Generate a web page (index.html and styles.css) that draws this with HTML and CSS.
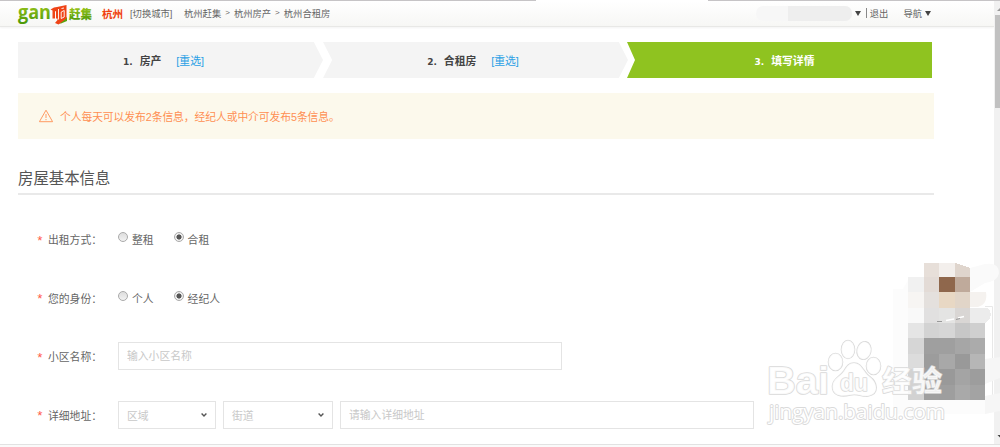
FILE: index.html
```html
<!DOCTYPE html>
<html lang="zh-CN">
<head>
    <meta charset="UTF-8">
    <title>杭州合租房 - 赶集</title>
    <link rel="stylesheet" href="styles.css">
</head>
<body>

<div class="tabline"><span></span><span></span></div>

<div class="window">
    <div class="page">
        <header class="header">
            <svg class="logo" width="75" height="24" viewBox="0 0 75 24">
                <defs>
                    <linearGradient id="green" x1="0" y1="0" x2="0" y2="1">
                        <stop offset=".2" stop-color="#9bc51b"/>
                        <stop offset=".9" stop-color="#4e9a08"/>
                    </linearGradient>
                </defs>
                <text class="logo-en" x="0" y="18" textLength="33" lengthAdjust="spacingAndGlyphs" fill="url(#green)">gan</text>
                <path d="M41 22.500 L49 16 V20 L43 22.500 Z" fill="#58a40c"/>
                <path d="M32.500 8.500 L36 6.500 L39 6 L48.500 4 V17.500 L40.500 23.500 L37 22 L39.500 19 V17.500 H38 V10 L37 10.500 V17.500 H34.500 V9.500 Z" fill="#ef4316"/>
                <path d="M40.500 8 V18.500 M43.200 11 L46.200 9.500 V16 L43.200 17.500 Z M43.500 7.500 L46 7" fill="none" stroke="#fff" stroke-width=".9"/>
                <text class="logo-cn" x="51" y="17.500" textLength="23" lengthAdjust="spacingAndGlyphs" fill="url(#green)">赶集</text>
            </svg>
            <b class="city">杭州</b>
            <a class="switch">[切换城市]</a>
            <nav class="crumbs"><a>杭州赶集</a><i>&gt;</i><a>杭州房产</a><i>&gt;</i><a>杭州合租房</a></nav>
            <div class="account">
                <span class="username"><span></span></span>
                <span class="caret"></span>
                <span class="bar"></span>
                <a class="logout">退出</a>
                <a>导航</a>
                <span class="caret"></span>
            </div>
        </header>

        <main class="content">
            <div class="steps">
                <div class="step first"><b><em>1.</em>房产</b><a>[重选]</a></div>
                <div class="step second"><b><em>2.</em>合租房</b><a>[重选]</a></div>
                <div class="step active"><b><em>3.</em>填写详情</b></div>
            </div>

            <div class="notice">
                <svg width="16" height="14" viewBox="0 0 16 14" fill="none" stroke="#ff9a62">
                    <path d="M8 1.2 L14.6 12.7 H1.4 Z M8 5 V9 M8 10 V11.2"/>
                </svg>
                <p>个人每天可以发布2条信息，经纪人或中介可发布5条信息。</p>
            </div>

            <h2>房屋基本信息</h2>

            <form class="form">
                <div class="row">
                    <span class="star">*</span><span class="label">出租方式：</span>
                    <label class="option"><input type="radio" name="rent">整租</label>
                    <label class="option"><input type="radio" name="rent" checked>合租</label>
                </div>
                <div class="row">
                    <span class="star">*</span><span class="label">您的身份：</span>
                    <label class="option"><input type="radio" name="role">个人</label>
                    <label class="option"><input type="radio" name="role" checked>经纪人</label>
                </div>
                <div class="row">
                    <span class="star">*</span><span class="label">小区名称：</span>
                    <input class="field estate" type="text" placeholder="输入小区名称">
                </div>
                <div class="row">
                    <span class="star">*</span><span class="label">详细地址：</span>
                    <div class="field select area">区域<svg width="6" height="4" viewBox="0 0 6 4"><path d="M.6 .6 L3 3 L5.4 .6"/></svg></div>
                    <div class="field select street">街道<svg width="6" height="4" viewBox="0 0 6 4"><path d="M.6 .6 L3 3 L5.4 .6"/></svg></div>
                    <input class="field address" type="text" placeholder="请输入详细地址">
                </div>
            </form>
        </main>
    </div>

    <div class="scrollbar">
        <svg width="6" height="13" viewBox="0 0 6 13"><path d="M3 9 L6 6 V9 Z" fill="#999"/></svg>
        <div class="thumb"></div>
        <svg class="down" width="6" height="12" viewBox="0 0 6 12"><path d="M3.5 3 H6 V5.5 Z" fill="#444"/></svg>
    </div>
</div>
<div class="statusbar"></div>

<!-- blurred contact card and site watermark float over the form -->
<svg class="overlay" width="240" height="180" viewBox="760 255 240 180">
    <path d="M985 306.500 H992.500 V400" fill="none" stroke="#e8e8e8"/>
    <path d="M893 289 H903 L910 277 H925 V400 H985 V414 H893 Z" fill="#fcfcfc"/>
    <g fill="#f6f6f6">
        <path d="M970 268 L985 264 Q999 262 999 273 Q998 281 985 283 L970 292 Z" fill="#fafafa"/>
        <path d="M970 292 H986 Q988 304 978 307 H970 Z" fill="#f5f2ef"/>
        <path d="M985 359 L1000 357 V378 L985 384 Z"/>
        <path d="M985 396 L1000 393 V411 L985 414 Z"/>
    </g>
    <g shape-rendering="crispEdges">
        <rect x="924" y="263" width="15" height="14" fill="#e7dfd9"/>
        <rect x="939" y="263" width="16" height="14" fill="#f3efec"/>
        <path d="M955 263 L970 268 V277 H955 Z" fill="#dfd5cd"/>
        <rect x="908" y="277" width="16" height="15" fill="#f1f1f1"/>
        <rect x="924" y="277" width="15" height="15" fill="#e3dbd6"/>
        <rect x="939" y="277" width="16" height="15" fill="#8f674c"/>
        <rect x="955" y="277" width="15" height="15" fill="#bfaa9b"/>
        <rect x="908" y="292" width="16" height="16" fill="#f7f5f3"/>
        <rect x="924" y="292" width="15" height="16" fill="#e4e0dd"/>
        <rect x="939" y="292" width="16" height="16" fill="#e8d8c4"/>
        <rect x="955" y="292" width="15" height="16" fill="#e1d5c8"/>
        <rect x="908" y="308" width="16" height="15" fill="#f9f9f9"/>
        <rect x="924" y="308" width="15" height="15" fill="#e1e0e0"/>
        <rect x="939" y="308" width="16" height="15" fill="#e4e4e3"/>
        <rect x="955" y="308" width="15" height="15" fill="#d9d6d4"/>
        <path d="M970 308 H988 Q992 312 990 319 L985 323 H970 Z" fill="#ececec"/>
        <rect x="908" y="323" width="16" height="15" fill="#e5e5e5"/>
        <rect x="924" y="323" width="15" height="15" fill="#d3d3d3"/>
        <rect x="939" y="323" width="16" height="15" fill="#d6d6d6"/>
        <rect x="955" y="323" width="15" height="15" fill="#c7c7c7"/>
        <rect x="970" y="323" width="15" height="15" fill="#cfcfcf"/>
        <rect x="908" y="338" width="16" height="16" fill="#d6d6d6"/>
        <rect x="924" y="338" width="31" height="16" fill="#9f9f9f"/>
        <rect x="955" y="338" width="15" height="16" fill="#a6a6a6"/>
        <rect x="970" y="338" width="15" height="16" fill="#ababab"/>
        <rect x="908" y="354" width="16" height="15" fill="#dcdcdc"/>
        <rect x="924" y="354" width="15" height="15" fill="#9c9c9c"/>
        <rect x="939" y="354" width="16" height="15" fill="#a8a8a8"/>
        <rect x="955" y="354" width="15" height="15" fill="#999"/>
        <rect x="970" y="354" width="15" height="15" fill="#b6b6b6"/>
        <rect x="908" y="369" width="16" height="31" fill="#d2d2d2"/>
        <rect x="924" y="369" width="15" height="31" fill="#9f9f9f"/>
        <rect x="939" y="369" width="16" height="16" fill="#999"/>
        <rect x="955" y="369" width="15" height="16" fill="#a4a4a4"/>
        <rect x="970" y="369" width="15" height="16" fill="#9d9d9d"/>
        <rect x="939" y="385" width="16" height="15" fill="#9e9e9e"/>
        <rect x="955" y="385" width="15" height="15" fill="#a9a9a9"/>
        <rect x="970" y="385" width="15" height="15" fill="#a3a3a3"/>
    </g>
    <path d="M946 320.500 L954 319 M958 318 L964 316.500" stroke="#fff" stroke-width="1.500"/>
    <path d="M937 321.500 H942 M956 319.500 L960 318.500" stroke="#999" stroke-width="1.200"/>
    <g class="mark">
        <text class="mark-bai" x="767" y="394" textLength="62" lengthAdjust="spacingAndGlyphs">Bai</text>
        <ellipse cx="835.500" cy="362" rx="7" ry="8.500"/>
        <ellipse cx="848" cy="349.500" rx="6.500" ry="9"/>
        <ellipse cx="864" cy="350.500" rx="6.800" ry="8.800" transform="rotate(12 864 350.500)"/>
        <ellipse cx="873.500" cy="366" rx="7" ry="8.500"/>
        <path d="M854 363 C862 363 863 372 870 377 C877 382 880 394 868 396 C861 397 858 393 850 395 C842 397 832 396 832.500 386 C833 378 840 377 844 371 C847 366 849 363 854 363 Z"/>
        <text class="mark-du" x="840" y="391" textLength="28" lengthAdjust="spacingAndGlyphs">du</text>
        <text class="mark-cn" x="882" y="392" textLength="60" lengthAdjust="spacingAndGlyphs">经验</text>
        <text class="mark-url" x="769" y="419" textLength="176" lengthAdjust="spacingAndGlyphs">jingyan.baidu.com</text>
    </g>
</svg>

</body>
</html>
```

FILE: styles.css
```css
* {
    box-sizing: border-box;
}
body {
    margin: 0;
    height: 447px;
    overflow: hidden;
    display: flex;
    flex-direction: column;
    background: #fff;
    color: #666;
    font-family: "Liberation Sans", "Noto Sans CJK SC", sans-serif;
    font-size: 10.8px;
}
.tabline {
    display: flex;
    justify-content: space-between;
    height: 1px;
}
.tabline span {
    width: 536px;
    background: #c6c4c6;
}
.tabline span:last-child {
    width: 292px;
}
.window {
    display: flex;
    height: 443px;
}
.page {
    flex: 1;
    overflow: hidden;
}
.header {
    display: flex;
    align-items: center;
    height: 26px;
    padding: 0 0 1px 18px;
    border-bottom: 1px solid #e8e8e6;
    background: linear-gradient(#fff, #f7f7f5);
    font-size: 9.3px;
    box-shadow: 0 1px 2px #f3f3f3;
}
.logo {
    flex: none;
    overflow: visible;
}
.logo-en {
    font: bold 19px "Open Sans", sans-serif;
}
.logo-cn {
    font: 900 12.5px "Noto Sans CJK SC", sans-serif;
}
.city {
    width: 28px;
    margin-left: 9px;
    color: #f0400c;
    font-size: 10.6px;
}
.switch {
    width: 54px;
    white-space: nowrap;
}
.crumbs {
    display: flex;
    white-space: nowrap;
}
.crumbs i {
    width: 12.7px;
    text-align: center;
    font-style: normal;
    font-size: 8px;
    line-height: 14px;
}
.account {
    display: flex;
    align-items: center;
    margin-left: auto;
    padding-right: 63px;
    white-space: nowrap;
}
.username {
    display: flex;
    justify-content: flex-end;
    width: 96px;
    height: 15px;
    margin-right: 3px;
    border-radius: 7px;
    background: #f7f7f7;
    overflow: hidden;
}
.username span {
    width: 64px;
    background: #eee;
}
.caret {
    border: 3.5px solid transparent;
    border-top: 5px solid #444;
    border-bottom: 0;
}
.bar {
    width: 1px;
    height: 10px;
    margin: 0 3px 0 5px;
    background: #888;
}
.logout {
    margin-right: 15px;
}
.account .caret:last-child {
    margin-left: 3px;
}
.content {
    width: 934px;
    padding: 15px 0 0 18px;
}
.steps {
    display: flex;
    width: 914px;
    height: 36px;
}
.step {
    display: flex;
    align-items: center;
    justify-content: center;
    gap: 15px;
    background: #f4f4f4;
    color: #444;
}
.step em {
    margin-right: 7px;
    font-family: "DejaVu Sans", sans-serif;
    font-size: 9px;
    font-style: normal;
}
.step a {
    color: #2a9fe5;
}
.first {
    width: 305px;
    padding-right: 14px;
    clip-path: polygon(0 0, 97% 0, 100% 50%, 97% 100%, 0 100%);
}
.second {
    width: 305px;
    padding-right: 5px;
    clip-path: polygon(0 0, 97% 0, 100% 50%, 97% 100%, 0 100%, 3% 50%);
}
.active {
    flex: 1;
    margin-left: -1px;
    padding-left: 10px;
    background: #8fc320;
    color: #fff;
    clip-path: polygon(0 0, 100% 0, 100% 100%, 0 100%, 8px 50%);
}
.notice {
    display: flex;
    align-items: center;
    height: 46px;
    margin-top: 15px;
    padding-left: 20px;
    background: #fcf9ec;
    color: #ff8f52;
}
.notice p {
    margin: 0 0 0 6px;
    letter-spacing: -.08px;
}
h2 {
    height: 56px;
    margin: 0;
    padding-top: 28px;
    border-bottom: 2px solid #e9e9e9;
    color: #555;
    font-size: 15.4px;
    font-weight: normal;
    line-height: 24px;
}
.form {
    display: flex;
    flex-direction: column;
    gap: 30.5px;
    padding: 30px 0 0 19px;
}
.row {
    display: flex;
    align-items: center;
    height: 28px;
}
.star {
    width: 11px;
    padding-top: 4px;
    margin-left: -1px;
    margin-right: 1px;
    color: #ff5a48;
    font-family: "Liberation Mono", monospace;
    font-size: 13px;
}
.label {
    width: 70px;
    white-space: nowrap;
}
.option {
    display: flex;
    align-items: center;
    margin-right: 20px;
}
.option input {
    appearance: none;
    width: 10px;
    height: 10px;
    margin: -4px 4px 0 0;
    border: 1px solid #aaa;
    border-radius: 50%;
    background: linear-gradient(#ddd, #f2f2f2);
}
.option input:checked {
    background: radial-gradient(#555 2.2px, #eee 2.9px);
}
.field {
    height: 28px;
    padding: 0 8px;
    border: 1px solid #e4e4e4;
    background: #fff;
    color: #c8c8c8;
    font-family: inherit;
    font-size: 10.8px;
}
.field::placeholder {
    color: #c8c8c8;
}
.estate {
    width: 444px;
}
.select {
    display: flex;
    align-items: center;
    justify-content: space-between;
}
.select path {
    fill: none;
    stroke: #555;
    stroke-width: 1.4;
}
.area {
    width: 98px;
    margin-right: 7px;
}
.street {
    width: 110px;
    margin-right: 7px;
}
.address {
    width: 414px;
}
.scrollbar {
    display: flex;
    flex-direction: column;
    width: 6px;
    padding-top: 1px;
    background: #f1f1f1;
}
.scrollbar svg {
    display: block;
}
.thumb {
    width: 5px;
    height: 93px;
    margin-left: 1px;
    background: #c1c1c1;
}
.down {
    margin-top: auto;
}
.statusbar {
    height: 3px;
    border-top: 1px solid #e2e2e2;
    background: #fafafa;
}
.overlay {
    position: absolute;
    left: 760px;
    top: 255px;
}
.mark {
    fill: rgba(255, 255, 255, .85);
    stroke: #dadada;
    stroke-width: 1.6;
    stroke-linejoin: round;
    paint-order: stroke;
}
.mark-bai {
    font: bold 38px "Liberation Sans", sans-serif;
}
.mark-du {
    font: bold 24px "Liberation Sans", sans-serif;
}
.mark-cn {
    font: bold 29px "Noto Sans CJK SC", sans-serif;
}
.mark-url {
    font: 20px "Open Sans", sans-serif;
    fill: #fff;
    stroke-width: 1.8;
}
```
